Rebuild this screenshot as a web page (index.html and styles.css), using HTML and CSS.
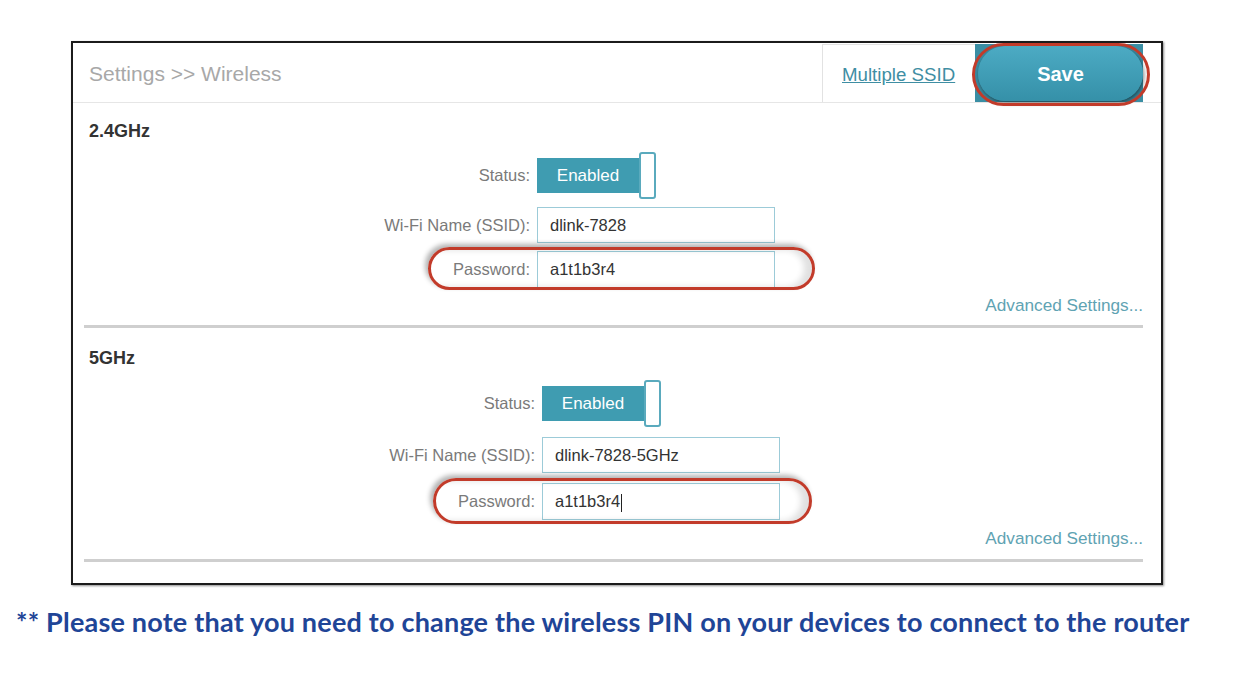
FILE: index.html
```html
<!DOCTYPE html>
<html lang="en">
<head>
    <meta charset="UTF-8">
    <meta name="viewport" content="width=device-width, initial-scale=1.0">
    <title>Settings - Wireless</title>
    <link rel="stylesheet" href="styles.css">
</head>
<body>
    <div class="frame">
        <div class="topbar">
            <div class="crumb">Settings &gt;&gt; Wireless</div>
            <div class="actions">
                <div class="multi"><a href="#">Multiple SSID</a></div>
                <div class="save-wrap">
                    <button class="save">Save</button>
                    <span class="ring ring-save"></span>
                </div>
            </div>
        </div>

        <!-- 2.4GHz band -->
        <section class="band">
            <h2>2.4GHz</h2>
            <div class="form">
                <div class="row">
                    <span class="label">Status:</span>
                    <div class="toggle"><span class="toggle-on">Enabled</span><span class="knob"></span></div>
                </div>
                <div class="row">
                    <span class="label">Wi-Fi Name (SSID):</span>
                    <div class="field">dlink-7828</div>
                </div>
                <div class="row">
                    <span class="label">Password:</span>
                    <div class="field field-pass">a1t1b3r4</div>
                    <span class="ring ring-pass"></span>
                </div>
            </div>
            <div class="adv"><a href="#">Advanced Settings...</a></div>
            <div class="rule"></div>
        </section>

        <!-- 5GHz band -->
        <section class="band band-5g">
            <h2>5GHz</h2>
            <div class="form">
                <div class="row">
                    <span class="label">Status:</span>
                    <div class="toggle"><span class="toggle-on">Enabled</span><span class="knob"></span></div>
                </div>
                <div class="row">
                    <span class="label">Wi-Fi Name (SSID):</span>
                    <div class="field">dlink-7828-5GHz</div>
                </div>
                <div class="row">
                    <span class="label">Password:</span>
                    <div class="field field-pass">a1t1b3r4<span class="caret"></span></div>
                    <span class="ring ring-pass"></span>
                </div>
            </div>
            <div class="adv"><a href="#">Advanced Settings...</a></div>
            <div class="rule"></div>
        </section>
    </div>

    <p class="note">** Please note that you need to change the wireless PIN on your devices to connect to the router</p>
</body>
</html>
```

FILE: styles.css
```css
body {
    margin: 0;
    font-family: "Liberation Sans", Arial, sans-serif;
    background-color: #fff;
}
.frame {
    margin: 41px 0 0 71px;
    width: 1092px;
    height: 544px;
    box-sizing: border-box;
    border: 2px solid #1b1b1b;
    box-shadow: 1px 1px 2px rgba(0,0,0,0.45);
}
.topbar {
    display: flex;
    justify-content: space-between;
    height: 60px;
    box-sizing: border-box;
    padding-right: 18px;
    border-bottom: 1px solid #e6e6e6;
}
.crumb {
    align-self: center;
    padding: 3px 0 0 16px;
    font-size: 21px;
    color: #a8a8a8;
}
.actions {
    display: flex;
}
.multi {
    display: flex;
    align-items: center;
    width: 153px;
    box-sizing: border-box;
    margin-top: 1px;
    padding: 2px 0 0 19px;
    border-top: 1px solid #e2e2e2;
    border-left: 1px solid #e2e2e2;
}
.multi a {
    font-size: 18.7px;
    color: #3f8ea3;
}
.save-wrap {
    position: relative;
    display: flex;
    width: 168px;
    margin-top: 1px;
    background-color: #3a8ea4;
}
.save {
    flex: 1;
    margin: 2px 0 1px 3px;
    padding-top: 2px;
    border: none;
    border-radius: 28px;
    background: linear-gradient(#4cabc4, #3590a8);
    box-shadow: 1px 2px 4px rgba(0,0,0,0.5);
    color: #fff;
    font-family: "Liberation Sans", Arial, sans-serif;
    font-size: 20px;
    font-weight: bold;
}
.ring {
    position: absolute;
    box-sizing: border-box;
    border: 3px solid #c23b2a;
    border-radius: 40px;
    pointer-events: none;
}
.ring-save {
    left: -3px;
    right: -7px;
    top: -1px;
    bottom: -4px;
}
.band {
    padding: 18px 18px 0 16px;
}
.band h2 {
    margin: 0;
    font-size: 18px;
    line-height: 20px;
    color: #333;
}
.form {
    display: flex;
    flex-direction: column;
    gap: 8px;
    margin: 11px 0 0 211px;
}
.row {
    position: relative;
    display: flex;
    align-items: center;
}
.label {
    width: 230px;
    padding-right: 7px;
    text-align: right;
    font-size: 16.5px;
    color: #7a7a7a;
}
.field {
    width: 238px;
    height: 36px;
    box-sizing: border-box;
    padding-left: 12px;
    border: 1px solid #9ccbd8;
    font-size: 16.5px;
    line-height: 34px;
    color: #333;
}
.field-pass {
    height: 37px;
    line-height: 35px;
}
.caret {
    display: inline-block;
    width: 1px;
    height: 18px;
    margin-left: 1px;
    vertical-align: middle;
    background-color: #222;
}
.toggle {
    display: flex;
    align-items: center;
    height: 47px;
}
.toggle-on {
    width: 102px;
    height: 35px;
    line-height: 35px;
    text-align: center;
    background-color: #3f9cb1;
    color: #fff;
    font-size: 17px;
}
.knob {
    width: 17px;
    height: 47px;
    box-sizing: border-box;
    border: 2px solid #5aaabd;
    border-radius: 3px;
    background-color: #fff;
}
.ring-pass {
    left: 128px;
    width: 387px;
    top: -4px;
    bottom: -2px;
    box-shadow: -3px -3px 5px rgba(0,0,0,0.3), inset -8px 0 6px rgba(0,0,0,0.12);
}
.adv {
    margin-top: 7px;
    text-align: right;
    font-size: 17.2px;
    line-height: 20px;
}
.adv a {
    color: #5fa3b3;
    text-decoration: none;
}
.rule {
    height: 3px;
    margin: 10px 0 0 -5px;
    background-color: #cfcfcf;
}
.band-5g {
    padding-top: 20px;
}
.band-5g .form {
    gap: 10px;
    margin: 12px 0 0 216px;
}
.band-5g .ring-pass {
    width: 379px;
    top: -5px;
    bottom: -4px;
}
.band-5g .adv {
    margin-top: 8px;
}
.band-5g .rule {
    margin-top: 11px;
}
.note {
    margin: 22px 0 0 16px;
    font-family: Lato, "Open Sans", sans-serif;
    font-size: 27px;
    font-weight: bold;
    letter-spacing: 0.2px;
    line-height: 30px;
    color: #1f4597;
}
```
